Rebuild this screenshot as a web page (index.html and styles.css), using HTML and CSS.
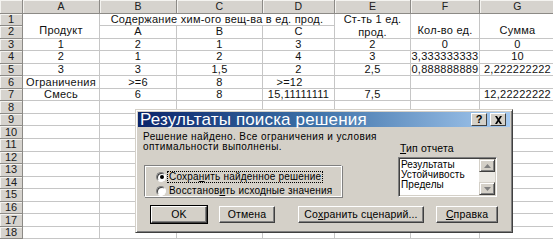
FILE: index.html
```html
<!DOCTYPE html>
<html lang="ru">
<head>
<meta charset="utf-8">
<title>Результаты поиска решения</title>
<link rel="stylesheet" href="styles.css">
</head>
<body>
<div class="screen">
  <div class="sheet">
    <div class="corner"></div>
    <div class="colhdr">A</div><div class="colhdr">B</div><div class="colhdr">C</div><div class="colhdr">D</div><div class="colhdr">E</div><div class="colhdr">F</div><div class="colhdr">G</div>

    <div class="rowhdr">1</div>
    <div class="cell span-r2 bottom">Продукт</div>
    <div class="cell span-c3">Содержание хим-ого вещ-ва в ед. прод.</div>
    <div class="cell span-r2 wrap">Ст-ть 1 ед.<br>прод.</div>
    <div class="cell span-r2 bottom">Кол-во ед.</div>
    <div class="cell span-r2 bottom">Сумма</div>

    <div class="rowhdr">2</div>
    <div class="cell">A</div><div class="cell">B</div><div class="cell">C</div>

    <div class="rowhdr">3</div>
    <div class="cell">1</div><div class="cell">2</div><div class="cell">1</div><div class="cell">3</div><div class="cell">2</div><div class="cell">0</div><div class="cell">0</div>

    <div class="rowhdr">4</div>
    <div class="cell">2</div><div class="cell">1</div><div class="cell">2</div><div class="cell">4</div><div class="cell">3</div><div class="cell">3,333333333</div><div class="cell">10</div>

    <div class="rowhdr">5</div>
    <div class="cell">3</div><div class="cell">3</div><div class="cell">1,5</div><div class="cell">2</div><div class="cell">2,5</div><div class="cell">0,888888889</div><div class="cell">2,222222222</div>

    <div class="rowhdr">6</div>
    <div class="cell">Ограничения</div><div class="cell">&gt;=6</div><div class="cell">8</div><div class="cell shift-l">&gt;=12</div><div class="cell"></div><div class="cell"></div><div class="cell"></div>

    <div class="rowhdr">7</div>
    <div class="cell">Смесь</div><div class="cell">6</div><div class="cell">8</div><div class="cell">15,11111111</div><div class="cell">7,5</div><div class="cell"></div><div class="cell">12,22222222</div>

    <div class="rowhdr">8</div><div class="cell"></div><div class="cell"></div><div class="cell"></div><div class="cell"></div><div class="cell"></div><div class="cell"></div><div class="cell"></div>
    <div class="rowhdr">9</div><div class="cell"></div><div class="cell"></div><div class="cell"></div><div class="cell"></div><div class="cell"></div><div class="cell"></div><div class="cell"></div>
    <div class="rowhdr">10</div><div class="cell"></div><div class="cell"></div><div class="cell"></div><div class="cell"></div><div class="cell"></div><div class="cell"></div><div class="cell"></div>
    <div class="rowhdr">11</div><div class="cell"></div><div class="cell"></div><div class="cell"></div><div class="cell"></div><div class="cell"></div><div class="cell"></div><div class="cell"></div>
    <div class="rowhdr">12</div><div class="cell"></div><div class="cell"></div><div class="cell"></div><div class="cell"></div><div class="cell"></div><div class="cell"></div><div class="cell"></div>
    <div class="rowhdr">13</div><div class="cell"></div><div class="cell"></div><div class="cell"></div><div class="cell"></div><div class="cell"></div><div class="cell"></div><div class="cell"></div>
    <div class="rowhdr">14</div><div class="cell"></div><div class="cell"></div><div class="cell"></div><div class="cell"></div><div class="cell"></div><div class="cell"></div><div class="cell"></div>
    <div class="rowhdr">15</div><div class="cell"></div><div class="cell"></div><div class="cell"></div><div class="cell"></div><div class="cell"></div><div class="cell"></div><div class="cell"></div>
    <div class="rowhdr">16</div><div class="cell"></div><div class="cell"></div><div class="cell"></div><div class="cell"></div><div class="cell"></div><div class="cell"></div><div class="cell"></div>
    <div class="rowhdr">17</div><div class="cell"></div><div class="cell"></div><div class="cell"></div><div class="cell"></div><div class="cell"></div><div class="cell"></div><div class="cell"></div>
    <div class="rowhdr">18</div><div class="cell"></div><div class="cell"></div><div class="cell"></div><div class="cell"></div><div class="cell"></div><div class="cell"></div><div class="cell"></div>
  </div>

  <div class="dialog">
    <div class="titlebar">
      <span class="title">Результаты поиска решения</span>
      <div class="tbtns">
        <span class="tbtn help">?</span>
        <span class="tbtn close"><svg width="9" height="8" viewBox="0 0 9 8"><path d="M1 0h2l1.5 2.5L6 0h2L5.5 4 8 8H6L4.5 5.5 3 8H1l2.5-4z" fill="#000"/></svg></span>
      </div>
    </div>
    <div class="dbody">
      <div class="toprow">
        <div class="leftcol">
          <p class="msg">Решение найдено. Все ограничения и условия<br>оптимальности выполнены.</p>
          <div class="group">
            <div class="radio-row">
              <span class="radio checked"></span>
              <span class="rlabel focus">Сохра<u>н</u>ить найденное решение</span>
            </div>
            <div class="radio-row">
              <span class="radio"></span>
              <span class="rlabel">Восстанов<u>и</u>ть исходные значения</span>
            </div>
          </div>
        </div>
        <div class="rightcol">
          <div class="lblabel"><u>Т</u>ип отчета</div>
          <div class="listbox">
            <div class="items">
              <div>Результаты</div>
              <div>Устойчивость</div>
              <div>Пределы</div>
            </div>
            <div class="scroll">
              <span class="sbtn"><svg width="7" height="4" viewBox="0 0 7 4"><path d="M3.5 0L7 4H0z" fill="#808080"/></svg></span>
              <span class="strack"></span>
              <span class="sbtn"><svg width="7" height="4" viewBox="0 0 7 4"><path d="M0 0h7L3.5 4z" fill="#808080"/></svg></span>
            </div>
          </div>
        </div>
      </div>
      <div class="buttons">
        <span class="btn ok default">OK</span>
        <span class="btn cancel">Отмена</span>
        <span class="btn save">Со<u>х</u>ранить сценарий...</span>
        <span class="btn help2"><u>С</u>правка</span>
      </div>
    </div>
  </div>
</div>
</body>
</html>
```

FILE: styles.css
```css
html, body {
  margin: 0;
  padding: 0;
  background: #ffffff;
  overflow: hidden;
}

.screen {
  position: relative;
  width: 553px;
  height: 242px;
  overflow: hidden;
  font-family: "Liberation Sans", Arial, sans-serif;
  font-size: 11px;
  color: #111;
}

.sheet {
  display: grid;
  grid-template-columns: 23px 77px 77px 86px 72px 76px 69px 76px;
  grid-template-rows: 13.5px repeat(18, 12.55px);
  background: #fff;
}

.corner,
.colhdr,
.rowhdr {
  background: #d6d3ce;
  box-sizing: border-box;
  border-right: 1px solid #8c8a86;
  border-bottom: 1px solid #8c8a86;
  box-shadow: inset 1px 1px 0 #f4f3f0;
  display: flex;
  align-items: center;
  justify-content: center;
  line-height: 1;
  color: #202020;
}

.colhdr {
  font-size: 10.5px;
  letter-spacing: 0.2px;
}

.rowhdr {
  font-size: 11px;
}

.cell {
  box-sizing: border-box;
  border-right: 1px solid #c6c6c6;
  border-bottom: 1px solid #c6c6c6;
  display: flex;
  align-items: center;
  justify-content: center;
  white-space: nowrap;
  line-height: 1;
  overflow: visible;
  font-size: 11px;
  letter-spacing: 0.25px;
}

.span-c3 {
  grid-column: span 3;
}

.span-r2 {
  grid-row: span 2;
}

.bottom {
  align-items: flex-end;
  padding-bottom: 1.5px;
}

.wrap {
  flex-direction: column;
  line-height: 12.5px;
  text-align: center;
}

.shift-l {
  padding-right: 18px;
}

/* dialog */
.dialog {
  position: absolute;
  left: 135px;
  top: 109px;
  width: 378px;
  height: 124px;
  box-sizing: border-box;
  background: #d4d0c8;
  border: 1px solid;
  border-color: #d4d0c8 #404040 #404040 #d4d0c8;
  box-shadow: inset 1px 1px 0 #ffffff, inset -1px -1px 0 #808080;
  padding: 2px;
  display: flex;
  flex-direction: column;
  color: #000;
}

.titlebar {
  height: 15px;
  background: linear-gradient(to right, #0a246a 0%, #3a6ea5 45%, #a6caf0 100%);
  display: flex;
  align-items: center;
  justify-content: space-between;
  padding-left: 2px;
  padding-right: 4px;
}

.title {
  color: #fff;
  font-family: "Liberation Sans", Arial, sans-serif;
  font-size: 17px;
  line-height: 15px;
  white-space: nowrap;
  letter-spacing: 0.15px;
}

.tbtns {
  display: flex;
  gap: 3px;
}

.tbtn {
  width: 16px;
  height: 13px;
  box-sizing: border-box;
  background: #d4d0c8;
  border: 1px solid;
  border-color: #ffffff #404040 #404040 #ffffff;
  display: flex;
  align-items: center;
  justify-content: center;
  font-weight: bold;
  font-size: 11px;
  line-height: 1;
}

.dbody {
  flex: 1;
  display: flex;
  flex-direction: column;
  padding: 5px 0 0 5px;
  font-family: "Liberation Sans", Arial, sans-serif;
  font-size: 10.5px;
  letter-spacing: 0.15px;
}

.toprow {
  display: flex;
  gap: 56px;
}

.leftcol {
  width: 199px;
  display: flex;
  flex-direction: column;
}

.msg {
  margin: 0;
  font-size: 10px;
  letter-spacing: 0.4px;
  line-height: 10px;
  white-space: nowrap;
}

.group {
  margin-top: 13px;
  margin-left: 1px;
  width: 198px;
  height: 32px;
  box-sizing: border-box;
  border: 1px solid;
  border-color: #808080 #ffffff #ffffff #808080;
  box-shadow: inset 1px 1px 0 #ffffff, 1px 1px 0 #808080;
  padding: 5px 0 0 11px;
  display: flex;
  flex-direction: column;
  gap: 3px;
}

.radio-row {
  display: flex;
  align-items: center;
  gap: 2px;
  height: 11px;
}

.radio {
  width: 10px;
  height: 10px;
  flex: none;
  box-sizing: border-box;
  border-radius: 50%;
  background: #fff;
  border: 1px solid;
  border-color: #808080 #ffffff #ffffff #808080;
  box-shadow: inset 1px 1px 0 #404040;
  position: relative;
}

.radio.checked::after {
  content: "";
  position: absolute;
  left: 2.5px;
  top: 2.5px;
  width: 4px;
  height: 4px;
  border-radius: 50%;
  background: #000;
}

.rlabel {
  white-space: nowrap;
  font-size: 10px;
  letter-spacing: 0.2px;
  line-height: 10px;
  padding: 0 1px;
}

.rlabel.focus {
  outline: 1px dotted #000;
  outline-offset: 0;
}

.rightcol {
  display: flex;
  flex-direction: column;
  padding-top: 11px;
}

.lblabel {
  line-height: 10px;
  margin-left: 2px;
  white-space: nowrap;
}

.listbox {
  margin-top: 4px;
  width: 99px;
  height: 40px;
  box-sizing: border-box;
  background: #fff;
  border: 1px solid;
  border-color: #808080 #ffffff #ffffff #808080;
  box-shadow: inset 1px 1px 0 #404040, inset -1px -1px 0 #d4d0c8;
  display: flex;
  padding: 1px 1px 1px 2px;
}

.items {
  flex: 1;
  font-size: 10px;
  letter-spacing: 0.1px;
  line-height: 10px;
  white-space: nowrap;
  padding-top: 1px;
}

.scroll {
  width: 16px;
  display: flex;
  flex-direction: column;
  background: #ebe9e4;
}

.sbtn {
  height: 13px;
  box-sizing: border-box;
  background: #d4d0c8;
  border: 1px solid;
  border-color: #d4d0c8 #404040 #404040 #d4d0c8;
  box-shadow: inset 1px 1px 0 #fff, inset -1px -1px 0 #808080;
  display: flex;
  align-items: center;
  justify-content: center;
}

.strack {
  flex: 1;
}

.buttons {
  display: flex;
  margin-top: 9px;
  margin-left: 8px;
  height: 17px;
}

.btn {
  box-sizing: border-box;
  height: 17px;
  background: #d4d0c8;
  border: 1px solid;
  border-color: #ffffff #404040 #404040 #ffffff;
  box-shadow: inset -1px -1px 0 #808080;
  display: flex;
  align-items: center;
  justify-content: center;
  line-height: 1;
  white-space: nowrap;
}

.btn.default {
  outline: 1px solid #000;
}

.ok { width: 56px; }
.cancel { width: 56px; margin-left: 12px; }
.save { width: 126px; margin-left: 23px; }
.help2 { width: 62px; margin-left: 12px; }

u {
  text-decoration: underline;
  text-underline-offset: 1px;
}
```
